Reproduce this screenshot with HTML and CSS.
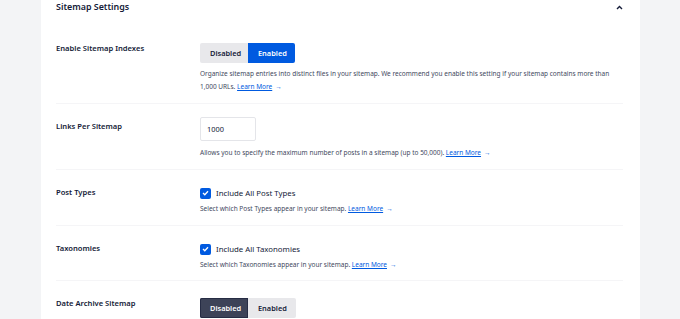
FILE: index.html
```html
<!DOCTYPE html>
<html lang="en">
<head>
    <meta charset="UTF-8">
    <meta name="viewport" content="width=device-width, initial-scale=1.0">
    <title>Sitemap Settings</title>
    <link rel="stylesheet" href="styles.css">
</head>
<body>
    <div class="page">
        <div class="card">
            <div class="card-header">
                <h2>Sitemap Settings</h2>
                <span class="chevron">
                    <svg width="7" height="5" viewBox="0 0 7 5"><path d="M1 4 L3.5 1.5 L6 4" fill="none" stroke="#141b38" stroke-width="1.4"/></svg>
                </span>
            </div>

            <div class="row">
                <div class="label">Enable Sitemap Indexes</div>
                <div class="control">
                    <div class="toggle">
                        <button class="off">Disabled</button>
                        <button class="on">Enabled</button>
                    </div>
                    <p class="desc">Organize sitemap entries into distinct files in your sitemap. We recommend you enable this setting if your sitemap contains more than 1,000 URLs. <a href="#">Learn More</a><span class="arrow">→</span></p>
                </div>
            </div>

            <div class="row">
                <div class="label">Links Per Sitemap</div>
                <div class="control">
                    <input class="number" type="text" value="1000">
                    <p class="desc">Allows you to specify the maximum number of posts in a sitemap (up to 50,000). <a href="#">Learn More</a><span class="arrow">→</span></p>
                </div>
            </div>

            <div class="row">
                <div class="label">Post Types</div>
                <div class="control">
                    <label class="check"><span class="box"><svg width="7" height="6" viewBox="0 0 7 6"><path d="M1 3 L2.8 4.7 L6 1.2" fill="none" stroke="#fff" stroke-width="1.3"/></svg></span>Include All Post Types</label>
                    <p class="desc">Select which Post Types appear in your sitemap. <a href="#">Learn More</a><span class="arrow">→</span></p>
                </div>
            </div>

            <div class="row">
                <div class="label">Taxonomies</div>
                <div class="control">
                    <label class="check"><span class="box"><svg width="7" height="6" viewBox="0 0 7 6"><path d="M1 3 L2.8 4.7 L6 1.2" fill="none" stroke="#fff" stroke-width="1.3"/></svg></span>Include All Taxonomies</label>
                    <p class="desc">Select which Taxonomies appear in your sitemap. <a href="#">Learn More</a><span class="arrow">→</span></p>
                </div>
            </div>

            <div class="row">
                <div class="label">Date Archive Sitemap</div>
                <div class="control">
                    <div class="toggle">
                        <button class="off dark">Disabled</button>
                        <button class="off">Enabled</button>
                    </div>
                </div>
            </div>
        </div>
    </div>
</body>
</html>
```

FILE: styles.css
```css
:root {
    --dark: #141b38;
    --gray: #434960;
    --blue: #005ae0;
    --light: #e8e8eb;
    --line: #f5f5f7;
    --bg: #f3f4f6;
}

body {
    margin: 0;
    background: var(--bg);
    font-family: 'Noto Sans', 'Open Sans', sans-serif;
    color: var(--dark);
}

.page {
    padding: 0 40px 0 41px;
}

.card {
    background: #fff;
    padding: 0 17px 0 15px;
    height: 319px;
    overflow: hidden;
}

.card-header {
    display: flex;
    justify-content: space-between;
    align-items: center;
    height: 14px;
    padding-bottom: 12px;
}

.card-header h2 {
    margin: 0;
    font-size: 8.9px;
    font-weight: 600;
    line-height: 14px;
}

.chevron {
    display: flex;
}

.row {
    display: grid;
    grid-template-columns: 144px 1fr;
    padding: 17px 0 10px;
    border-bottom: 1px solid var(--line);
}

.row:nth-child(5) {
    padding-bottom: 9px;
}

.label {
    font-size: 7.6px;
    font-weight: 600;
    line-height: 10px;
}

.toggle {
    display: flex;
}

.toggle button {
    height: 20px;
    padding: 0 10px;
    border: none;
    font-family: inherit;
    font-size: 7.4px;
    font-weight: 600;
    cursor: pointer;
}

.toggle .off {
    width: 48px;
    background: var(--light);
    color: var(--dark);
}

.toggle .on {
    width: 47px;
    background: var(--blue);
    color: #fff;
    border-radius: 0 2px 2px 0;
}

.toggle .off:first-child {
    border-radius: 2px 0 0 2px;
}

.toggle .off:last-child {
    border-radius: 0 2px 2px 0;
}

.toggle .dark {
    background: #3d4358;
    color: #fff;
    box-shadow: inset 0 0 0 1px #262c44;
}

.desc {
    margin: 4px 0 0;
    font-size: 6.5px;
    line-height: 13px;
    color: var(--gray);
}

.desc a {
    color: var(--blue);
}

.arrow {
    display: inline-block;
    margin-left: 3px;
    color: var(--blue);
}

.number {
    display: block;
    box-sizing: border-box;
    width: 56px;
    height: 24px;
    margin: -4px 0 0;
    padding: 0 6px;
    border: 1px solid #e4e5e9;
    border-radius: 2px;
    font-family: inherit;
    font-size: 7.4px;
    color: var(--dark);
}

.number + .desc {
    margin-top: 5px;
}

.check {
    display: flex;
    align-items: center;
    height: 12px;
    font-size: 7.8px;
    color: var(--dark);
}

.box {
    display: flex;
    align-items: center;
    justify-content: center;
    width: 11px;
    height: 11px;
    margin-right: 5px;
    border-radius: 2px;
    background: var(--blue);
}

.check + .desc {
    margin-top: 3px;
}
```
